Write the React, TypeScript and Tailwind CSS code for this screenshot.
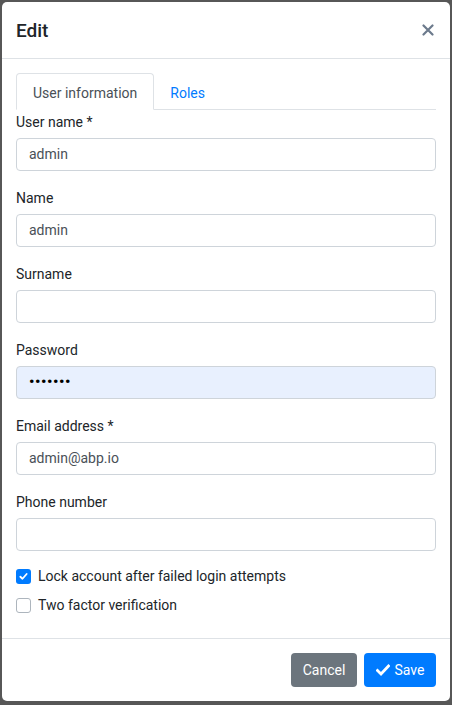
import React from "react";

function Field({ label, value, bg, password }: { label: string; value?: string; bg?: boolean; password?: boolean }) {
  return (
    <div className="flex flex-col mb-[15px]">
      <label className="leading-[24px] mb-[4px] text-[#212529]">{label}</label>
      <div
        className={
          "h-[33px] rounded-[4px] border border-[#ced4da] px-3 flex items-center " +
          (bg ? "bg-[#e8f0fe]" : "bg-white")
        }
      >
        {password ? (
          <span className="text-black text-[15px] tracking-[0.6px] font-bold leading-none">•••••••</span>
        ) : (
          <span className="text-[#495057]">{value}</span>
        )}
      </div>
    </div>
  );
}

export default function App() {
  return (
    <div className="w-[452px] h-[705px] bg-[#575757] pt-[2px] pl-[2px] pr-[2px] pb-[4px] font-['Roboto',sans-serif] text-[14px]">
      <div className="w-[448px] h-[699px] bg-white rounded-[5px] flex flex-col overflow-hidden">
        <div className="h-[57px] border-b border-[#dee2e6] px-[14px] flex items-center justify-between shrink-0">
          <h5 className="text-[19px] font-medium text-[#212529] leading-none">Edit</h5>
          <svg width="12" height="12" viewBox="0 0 12 12" className="mr-[2px]">
            <path d="M1.5 1.5 L10.5 10.5 M10.5 1.5 L1.5 10.5" stroke="#6c7a8c" strokeWidth="2.2" strokeLinecap="round" />
          </svg>
        </div>
        <div className="flex-1 px-[14px] pt-[14px] flex flex-col">
          <div className="flex border-b border-[#dee2e6] h-[37px]">
            <div className="h-[37px] px-4 pt-[4px] flex items-center border border-[#dee2e6] border-b-white rounded-t-[4px] bg-white text-[#495057]">
              User information
            </div>
            <div className="h-[36px] px-4 pt-[4px] flex items-center text-[#007bff]">Roles</div>
          </div>
          <div className="flex flex-col">
            <Field label="User name *" value="admin" />
            <Field label="Name" value="admin" />
            <Field label="Surname" value="" />
            <Field label="Password" bg password />
            <Field label="Email address *" value="admin@abp.io" />
            <Field label="Phone number" value="" />
          </div>
          <div className="flex flex-col gap-[8px]">
            <div className="flex items-center h-[21px] gap-[7px]">
              <div className="w-[15px] h-[15px] rounded-[3px] bg-[#007bff] flex items-center justify-center">
                <svg width="9" height="9" viewBox="0 0 8 8">
                  <path d="M1.2 4.2 L3.1 6 L6.8 1.8" stroke="white" strokeWidth="1.6" fill="none" strokeLinecap="round" strokeLinejoin="round" />
                </svg>
              </div>
              <span className="text-[#212529]">Lock account after failed login attempts</span>
            </div>
            <div className="flex items-center h-[21px] gap-[7px]">
              <div className="w-[15px] h-[15px] rounded-[3px] border border-[#adb5bd] bg-white" />
              <span className="text-[#212529]">Two factor verification</span>
            </div>
          </div>
        </div>
        <div className="h-[63px] border-t border-[#dee2e6] px-[14px] flex items-center justify-end gap-[7px] shrink-0">
          <button className="h-[34px] w-[66px] rounded-[4px] bg-[#6c757d] text-white">Cancel</button>
          <button className="h-[34px] w-[72px] rounded-[4px] bg-[#007bff] text-white flex items-center justify-center gap-[5px]">
            <svg width="14" height="12" viewBox="0 0 14 12">
              <path d="M1.5 6.5 L5 10 L12.5 2" stroke="white" strokeWidth="2.8" fill="none" strokeLinecap="square" />
            </svg>
            Save
          </button>
        </div>
      </div>
    </div>
  );
}
